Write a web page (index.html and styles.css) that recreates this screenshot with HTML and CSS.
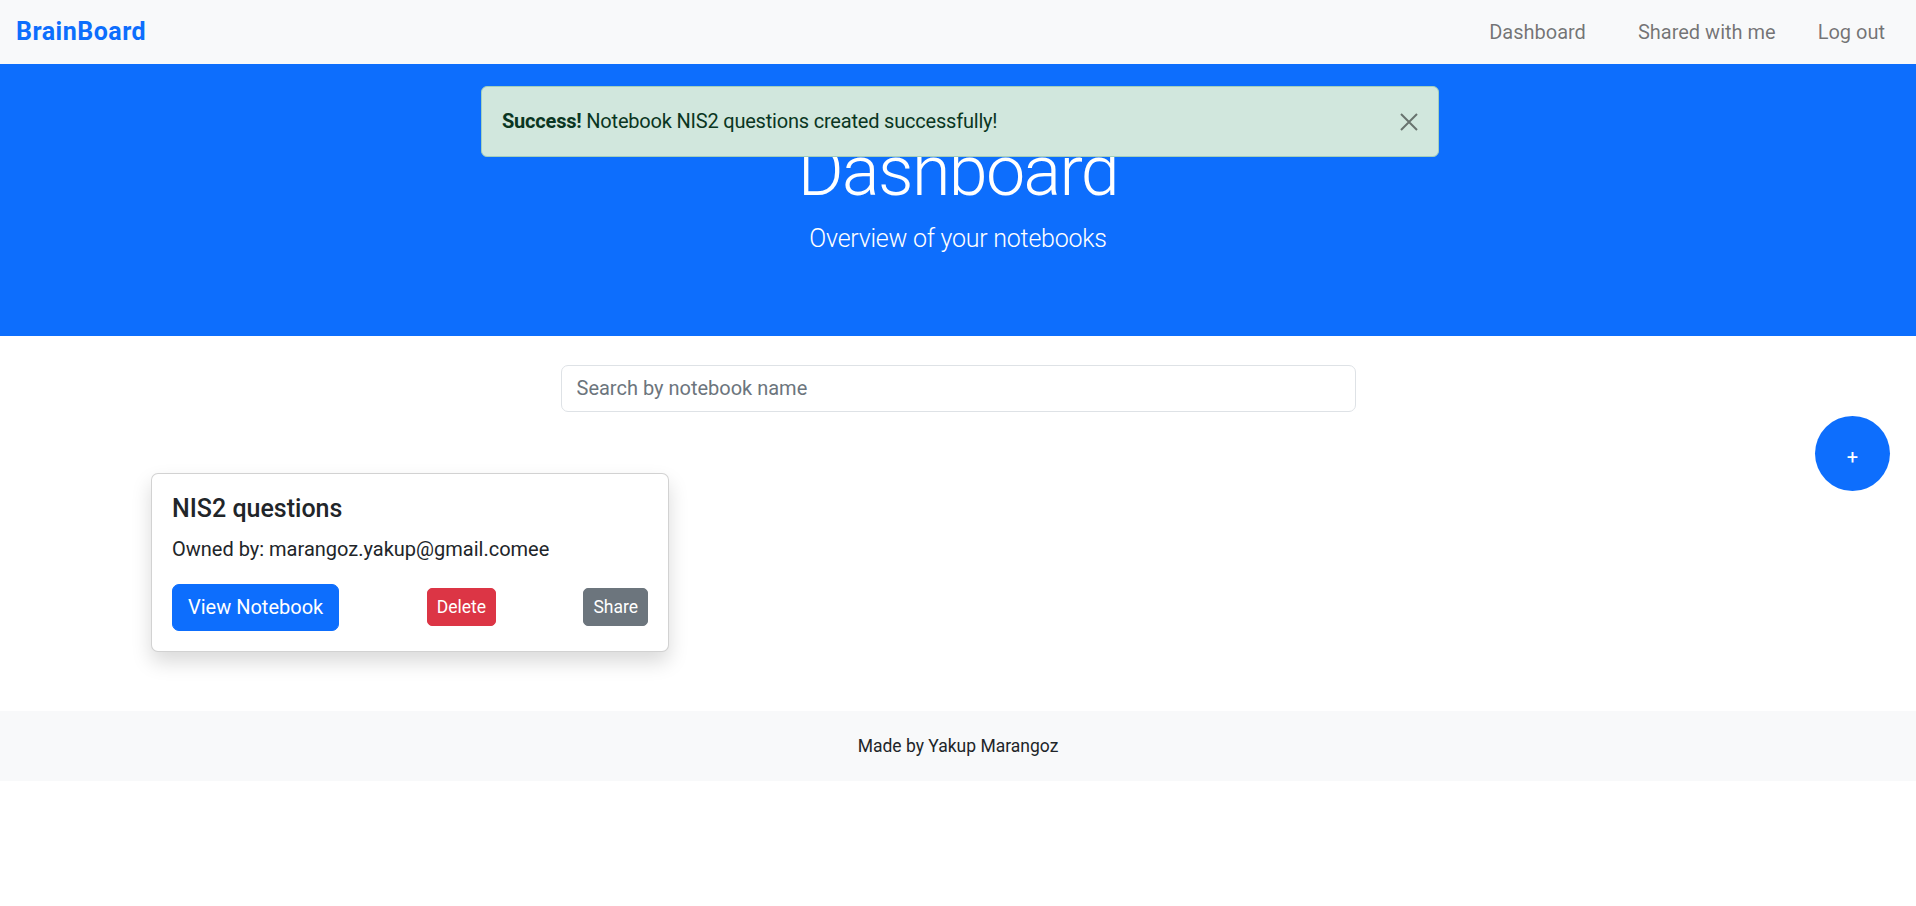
FILE: index.html
```html
<!DOCTYPE html>
<html lang="en">
<head>
<meta charset="utf-8">
<title>BrainBoard - Dashboard</title>
<link rel="stylesheet" href="styles.css">
</head>
<body>
<nav class="navbar">
  <a class="brand" href="#">BrainBoard</a>
  <ul class="nav-links">
    <li class="nav-item nav-dashboard"><a href="#">Dashboard</a></li>
    <li class="nav-item nav-shared"><a href="#">Shared with me</a></li>
    <li class="nav-item nav-logout"><a href="#">Log out</a></li>
  </ul>
</nav>

<header class="hero">
  <h1 class="hero-title">Dashboard</h1>
  <p class="hero-lead">Overview of your notebooks</p>
</header>

<div class="alert" role="alert">
  <span class="alert-text"><strong>Success!</strong> Notebook NIS2 questions created successfully!</span>
  <button class="alert-close" type="button" aria-label="Close">
    <svg width="20" height="20" viewBox="0 0 20 20"><path d="M2 2 L18 18 M18 2 L2 18" stroke="currentColor" stroke-width="2" fill="none"/></svg>
  </button>
</div>

<main class="main">
  <div class="search-row">
    <input class="search-input" type="text" placeholder="Search by notebook name">
  </div>
  <div class="cards">
    <div class="card">
      <h5 class="card-title">NIS2 questions</h5>
      <p class="card-text">Owned by: marangoz.yakup@gmail.comee</p>
      <div class="card-actions">
        <button class="btn btn-primary">View Notebook</button>
        <button class="btn btn-sm btn-danger">Delete</button>
        <button class="btn btn-sm btn-secondary">Share</button>
      </div>
    </div>
  </div>
</main>

<button class="fab" type="button">+</button>

<footer class="footer">
  <span class="footer-text">Made by Yakup Marangoz</span>
</footer>
</body>
</html>
```
FILE: styles.css
```css
* { box-sizing: border-box; }
html, body { margin: 0; padding: 0; }
body {
  font-family: Roboto, "Liberation Sans", sans-serif;
  color: #212529;
  background: #fff;
  position: relative;
  min-height: 906px;
}

/* Navbar */
.navbar {
  height: 64px;
  background: #f8f9fa;
  display: flex;
  align-items: center;
  justify-content: space-between;
  padding: 0 21px 0 16px;
}
.brand {
  font-size: 25px;
  font-weight: 700;
  color: #0d6efd;
  text-decoration: none;
  line-height: 30px;
  letter-spacing: 0.5px;
}
.nav-links {
  list-style: none;
  margin: 0;
  padding: 0;
  display: flex;
  align-items: center;
}
.nav-item a {
  display: block;
  padding: 0 10px;
  font-size: 20px;
  line-height: 30px;
  color: rgba(0, 0, 0, 0.55);
  text-decoration: none;
}
.nav-shared { margin-left: 32px; }
.nav-logout { margin-left: 22px; }

/* Hero */
.hero {
  background: #0d6efd;
  color: #fff;
  text-align: center;
  padding: 65px 0 78px;
}
.hero-title {
  margin: 0 0 7px;
  font-size: 70px;
  font-weight: 300;
  line-height: 84px;
  letter-spacing: -1.6px;
}
.hero-lead {
  margin: 0;
  font-size: 25px;
  font-weight: 300;
  line-height: 37.5px;
  letter-spacing: -0.25px;
}

/* Alert */
.alert {
  position: absolute;
  top: 86px;
  left: 481px;
  width: 958px;
  height: 71px;
  padding: 20px 60px 20px 20px;
  background: #d1e7dd;
  border: 1px solid #a3cfbb;
  border-radius: 6px;
  color: #0a3622;
  font-size: 20px;
  line-height: 29px;
  letter-spacing: -0.2px;
}
.alert strong { font-weight: 700; }
.alert-close {
  position: absolute;
  top: 25px;
  right: 19px;
  width: 20px;
  height: 20px;
  padding: 0;
  border: 0;
  background: transparent;
  color: rgba(0, 0, 0, 0.5);
  display: flex;
}

/* Main */
.main { padding: 0; }
.search-row {
  display: flex;
  justify-content: center;
  margin-top: 29px;
}
.search-input {
  width: 795px;
  height: 47px;
  padding: 0 15px;
  border: 1px solid #dee2e6;
  border-radius: 7px;
  font-family: inherit;
  font-size: 20px;
  color: #212529;
  background: #fff;
}
.search-input::placeholder { color: #6c757d; }

.cards {
  width: 1650px;
  margin: 61px auto 0;
  padding: 0 18px;
  display: grid;
  grid-template-columns: 518px;
}
.card {
  border: 1px solid rgba(0, 0, 0, 0.175);
  border-radius: 7px;
  padding: 20px;
  background: #fff;
  box-shadow: 0 10px 20px rgba(0, 0, 0, 0.15);
}
.card-title {
  margin: 0 0 10px;
  font-size: 25px;
  font-weight: 500;
  line-height: 30px;
}
.card-text {
  margin: 0 0 20px;
  font-size: 20px;
  line-height: 30px;
}
.card-actions {
  display: flex;
  justify-content: space-between;
  align-items: center;
}
.btn {
  font-family: inherit;
  color: #fff;
  border: 1px solid transparent;
  cursor: pointer;
  height: 47px;
  padding: 0 15px;
  font-size: 20px;
  border-radius: 7px;
}
.btn-sm {
  height: 38px;
  padding: 0 9px;
  font-size: 17.5px;
  border-radius: 5px;
}
.btn-primary { background: #0d6efd; border-color: #0d6efd; }
.btn-danger { background: #dc3545; border-color: #dc3545; }
.btn-secondary { background: #6c757d; border-color: #6c757d; }

/* Floating add button */
.fab {
  position: absolute;
  top: 416px;
  right: 26px;
  width: 75px;
  height: 75px;
  border-radius: 50%;
  border: 0;
  background: #0d6efd;
  color: #fff;
  font-family: inherit;
  font-size: 20px;
  padding: 6px 0 0;
  cursor: pointer;
}

/* Footer */
.footer {
  margin-top: 59px;
  height: 70px;
  background: #f8f9fa;
  display: flex;
  align-items: center;
  justify-content: center;
}
.footer-text {
  font-size: 17.5px;
  line-height: 26px;
  color: #212529;
}
```
